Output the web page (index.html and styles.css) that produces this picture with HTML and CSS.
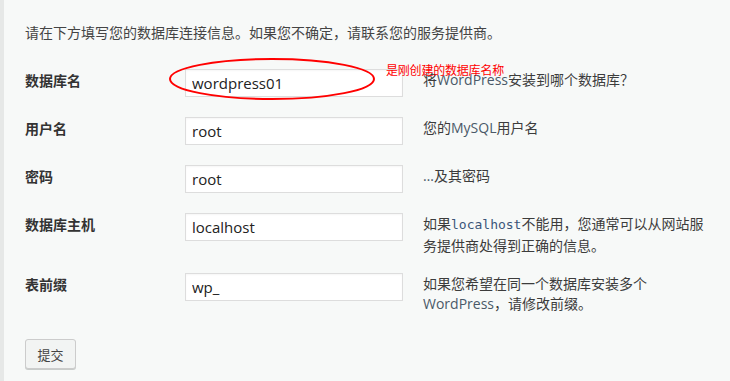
FILE: index.html
```html
<!DOCTYPE html>
<html lang="zh-CN">
<head>
    <meta charset="UTF-8">
    <title>WordPress › 安装配置文件</title>
    <link rel="stylesheet" href="styles.css">
</head>
<body>
    <div class="setup">
        <p class="intro">请在下方填写您的数据库连接信息。如果您不确定，请联系您的服务提供商。</p>

        <form class="setup-form">
            <div class="form-row">
                <label class="form-label" for="dbname">数据库名</label>
                <input class="form-input" id="dbname" type="text" value="wordpress01">
                <div class="form-desc">将<span class="latin">WordPress</span>安装到哪个数据库？</div>

                <!-- 标注 -->
                <svg class="mark-ellipse" width="210" height="46" viewBox="0 0 210 46">
                    <ellipse cx="104" cy="22" rx="102" ry="20" fill="none" stroke="#ff0000" stroke-width="2"/>
                </svg>
                <span class="mark-note">是刚创建的数据库名称</span>
            </div>

            <div class="form-row">
                <label class="form-label" for="uname">用户名</label>
                <input class="form-input" id="uname" type="text" value="root">
                <div class="form-desc">您的<span class="latin">MySQL</span>用户名</div>
            </div>

            <div class="form-row">
                <label class="form-label" for="pwd">密码</label>
                <input class="form-input" id="pwd" type="text" value="root">
                <div class="form-desc"><span class="latin">…</span>及其密码</div>
            </div>

            <div class="form-row">
                <label class="form-label" for="dbhost">数据库主机</label>
                <input class="form-input" id="dbhost" type="text" value="localhost">
                <div class="form-desc">如果<code>localhost</code>不能用，您通常可以从网站服务提供商处得到正确的信息。</div>
            </div>

            <div class="form-row">
                <label class="form-label" for="prefix">表前缀</label>
                <input class="form-input" id="prefix" type="text" value="wp_">
                <div class="form-desc">如果您希望在同一个数据库安装多个<span class="latin">WordPress</span>，请修改前缀。</div>
            </div>

            <button type="submit" class="submit-button">提交</button>
        </form>
    </div>
</body>
</html>
```

FILE: styles.css
```css
* {
    margin: 0;
    padding: 0;
    box-sizing: border-box;
}

body {
    font-family: "Noto Sans CJK SC", "Open Sans", sans-serif;
    background: #f7f9f8;
    color: #444444;
    height: 381px;
    overflow: hidden;
}

.setup {
    min-height: 381px;
    border-left: 4px solid #e6e8e7;
    padding: 22px 0 0 21px;
}

.intro {
    font-size: 14px;
    line-height: 20px;
    color: #444444;
    margin-bottom: 27px;
}

.setup-form {
    display: flex;
    flex-direction: column;
}

.form-row {
    position: relative;
    display: grid;
    grid-template-columns: 160px 218px 308px;
    align-items: start;
    margin-bottom: 20px;
}

.form-row:nth-child(4) {
    margin-bottom: 18px;
}

.form-label {
    font-size: 14px;
    line-height: 20px;
    font-weight: 700;
    color: #333333;
    padding-top: 1px;
}

.form-input {
    width: 218px;
    height: 28px;
    border: 1px solid #dddddd;
    background: #ffffff;
    padding: 0 6px;
    font-family: "Open Sans", sans-serif;
    font-size: 15px;
    color: #222222;
    outline: none;
    box-shadow: inset 0 1px 2px rgba(0, 0, 0, 0.04);
}

.form-desc {
    margin-left: 20px;
    font-size: 14px;
    line-height: 20px;
    color: #3c3c3c;
}

.latin {
    font-family: "Open Sans", sans-serif;
    color: #4a5968;
}

.form-desc code {
    font-family: "DejaVu Sans Mono", "Liberation Mono", monospace;
    font-size: 13px;
    color: #3b5578;
}

.mark-ellipse {
    position: absolute;
    left: 143px;
    top: -12px;
}

.mark-note {
    position: absolute;
    left: 361px;
    top: -6px;
    font-size: 12px;
    line-height: 14px;
    color: #ff0000;
    letter-spacing: -0.2px;
}

.submit-button {
    align-self: flex-start;
    margin-top: 5px;
    width: 51px;
    height: 30px;
    font-family: "Noto Sans CJK SC", sans-serif;
    font-size: 13px;
    color: #444444;
    background: #f2f4f3;
    border: 1px solid #cccccc;
    border-radius: 3px;
    box-shadow: 0 1px 0 #c8ccca;
    cursor: pointer;
}
```
